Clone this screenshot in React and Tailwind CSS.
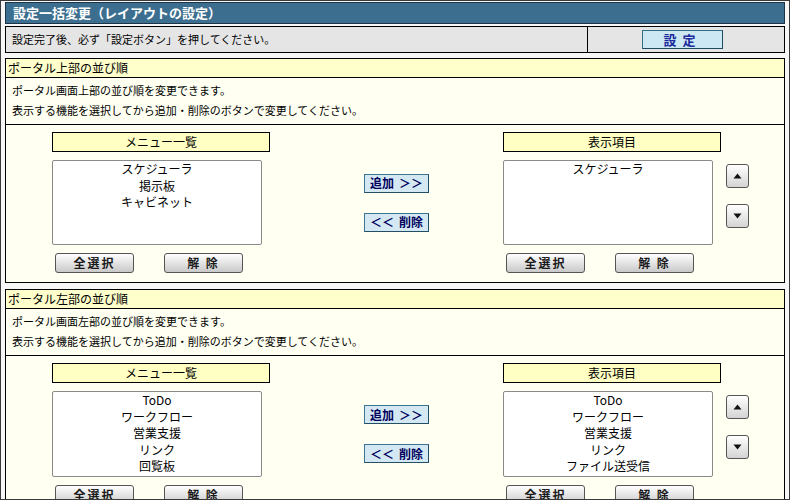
import React from "react";

const font = "font-['Noto_Sans_CJK_JP',sans-serif]";

const GrayButton = ({ children, className = "" }) => (
  <button
    className={`h-[20px] w-[79px] rounded-[3px] border border-[#555] bg-linear-to-b from-white to-[#c9c9c9] text-[12px] font-bold leading-none tracking-[2px] text-[#1a1a1a] ${className}`}
  >
    {children}
  </button>
);

const MoveButton = ({ children }) => (
  <button className="flex h-[19px] w-[65px] items-center justify-center gap-[5px] border border-[#3c7592] border-r-[#234e64] border-b-[#234e64] bg-[#d3e8f3] text-[12px] font-bold leading-none text-[#00005c]">
    {children}
  </button>
);

const ArrowButton = ({ up }) => (
  <button className="flex h-[24px] w-[23px] items-center justify-center rounded-[3px] border border-[#555] bg-linear-to-b from-white to-[#d4d4d4]">
    <svg width="9" height="6" viewBox="0 0 9 6">
      {up ? (
        <polygon points="4.5,0.5 8.5,5.5 0.5,5.5" fill="#111" />
      ) : (
        <polygon points="0.5,0.5 8.5,0.5 4.5,5.5" fill="#111" />
      )}
    </svg>
  </button>
);

const ListBox = ({ items, height }) => (
  <div
    className={`w-[210px] rounded-[2px] border border-[#8a8a8a] bg-white text-center text-[12px] leading-[16.5px] text-black ${height}`}
  >
    {items.map((item) => (
      <div key={item}>{item}</div>
    ))}
  </div>
);

const Label = ({ children }) => (
  <div className="flex h-[20px] w-[218px] items-center justify-center border border-black bg-[#ffffc4] text-[12px] text-black">
    {children}
  </div>
);

const Section = ({ title, desc, left, right, listHeight, className = "" }) => (
  <div className={`border border-black bg-[#fffff2] ${className}`}>
    <div className="flex h-[19px] items-center border-b border-black bg-[#ffffcc] pl-[2px] text-[12px] text-black">
      {title}
    </div>
    <div className="h-[47px] border-b border-black pl-[6px] pt-[2px] text-[11px] leading-[20px] text-black">
      <div>{desc}</div>
      <div>表示する機能を選択してから追加・削除のボタンで変更してください。</div>
    </div>
    <div className="flex pl-[46px] pt-[7px] pb-[9px]">
      {/* left column */}
      <div className="w-[218px]">
        <Label>メニュー一覧</Label>
        <div className="mt-[8px]">
          <ListBox items={left} height={listHeight} />
        </div>
        <div className="mt-[8px] flex gap-[30px] pl-[3px]">
          <GrayButton>全選択</GrayButton>
          <GrayButton>解 除</GrayButton>
        </div>
      </div>

      {/* middle */}
      <div className="ml-[94px] flex flex-col justify-center gap-[20px]">
        <MoveButton>
          <span>追加</span>
          <span>＞＞</span>
        </MoveButton>
        <MoveButton>
          <span>＜＜</span>
          <span>削除</span>
        </MoveButton>
      </div>

      {/* right column */}
      <div className="ml-[74px]">
        <Label>表示項目</Label>
        <div className="mt-[8px] flex">
          <ListBox items={right} height={listHeight} />
          <div className="ml-[13px] mt-[4px] flex flex-col gap-[16px]">
            <ArrowButton up />
            <ArrowButton />
          </div>
        </div>
        <div className="mt-[8px] flex gap-[30px] pl-[3px]">
          <GrayButton>全選択</GrayButton>
          <GrayButton>解 除</GrayButton>
        </div>
      </div>
    </div>
  </div>
);

export default function App() {
  return (
    <div
      className={`h-[500px] w-[790px] overflow-hidden border border-[#3a3a3a] bg-[#f7f7f7] pl-[4px] pr-[4px] pt-[1px] ${font}`}
    >
      {/* title */}
      <div className="flex h-[22px] items-center border border-[#1d3546] bg-[#3c6f8f] pl-[7px] text-[13px] font-bold text-white">
        設定一括変更（レイアウトの設定）
      </div>

      {/* notice row */}
      <div className="mt-[2px] flex h-[27px] border border-black bg-[#e5e5e5]">
        <div className="flex w-[582px] items-center border-r border-black pl-[6px] text-[11px] text-black">
          設定完了後、必ず「設定ボタン」を押してください。
        </div>
        <div className="flex items-center pl-[54px]">
          <button className="h-[19px] w-[81px] border border-[#2f6f8a] border-r-[#1d4a5e] border-b-[#1d4a5e] bg-[#cde8f2] text-[13px] font-bold leading-none tracking-[6px] text-[#1c2a9c]">
            設定
          </button>
        </div>
      </div>

      <Section
        className="mt-[5px]"
        title="ポータル上部の並び順"
        desc="ポータル画面上部の並び順を変更できます。"
        left={["スケジューラ", "掲示板", "キャビネット"]}
        right={["スケジューラ"]}
        listHeight="h-[85px]"
      />

      <Section
        className="mt-[6px]"
        title="ポータル左部の並び順"
        desc="ポータル画面左部の並び順を変更できます。"
        left={["ToDo", "ワークフロー", "営業支援", "リンク", "回覧板"]}
        right={["ToDo", "ワークフロー", "営業支援", "リンク", "ファイル送受信"]}
        listHeight="h-[86px]"
      />
    </div>
  );
}
